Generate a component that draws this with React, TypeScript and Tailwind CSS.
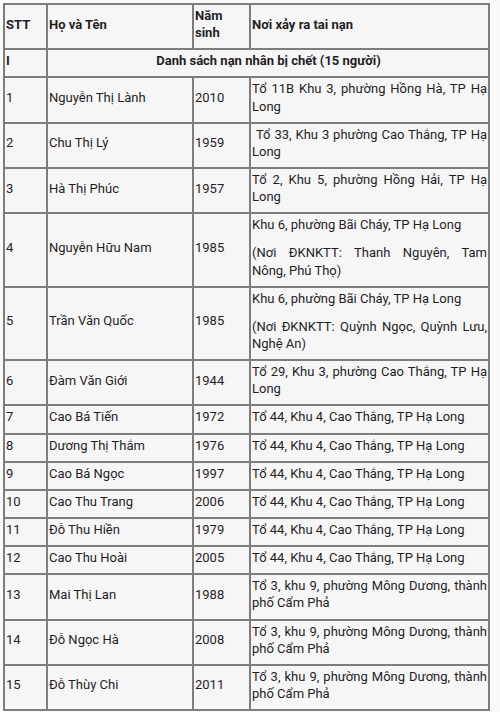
import React from "react"

type Row = {
  stt: string
  name: string
  year: string
  place: string[][]
}

const rows: Row[] = [
  { stt: "1", name: "Nguyễn Thị Lành", year: "2010", place: [["Tổ 11B Khu 3, phường Hồng Hà, TP Hạ", "Long"]] },
  { stt: "2", name: "Chu Thị Lý", year: "1959", place: [["\u00a0Tổ 33, Khu 3 phường Cao Thắng, TP Hạ", "Long"]] },
  { stt: "3", name: "Hà Thị Phúc", year: "1957", place: [["Tổ 2, Khu 5, phường Hồng Hải, TP Hạ", "Long"]] },
  {
    stt: "4",
    name: "Nguyễn Hữu Nam",
    year: "1985",
    place: [["Khu 6, phường Bãi Cháy, TP Hạ Long"], ["(Nơi ĐKNKTT: Thanh Nguyên, Tam", "Nông, Phú Thọ)"]],
  },
  {
    stt: "5",
    name: "Trần Văn Quốc",
    year: "1985",
    place: [["Khu 6, phường Bãi Cháy, TP Hạ Long"], ["(Nơi ĐKNKTT: Quỳnh Ngọc, Quỳnh Lưu,", "Nghệ An)"]],
  },
  { stt: "6", name: "Đàm Văn Giới", year: "1944", place: [["Tổ 29, Khu 3, phường Cao Thắng, TP Hạ", "Long"]] },
  { stt: "7", name: "Cao Bá Tiến", year: "1972", place: [["Tổ 44, Khu 4, Cao Thắng, TP Hạ Long"]] },
  { stt: "8", name: "Dương Thị Thắm", year: "1976", place: [["Tổ 44, Khu 4, Cao Thắng, TP Hạ Long"]] },
  { stt: "9", name: "Cao Bá Ngọc", year: "1997", place: [["Tổ 44, Khu 4, Cao Thắng, TP Hạ Long"]] },
  { stt: "10", name: "Cao Thu Trang", year: "2006", place: [["Tổ 44, Khu 4, Cao Thắng, TP Hạ Long"]] },
  { stt: "11", name: "Đỗ Thu Hiền", year: "1979", place: [["Tổ 44, Khu 4, Cao Thắng, TP Hạ Long"]] },
  { stt: "12", name: "Cao Thu Hoài", year: "2005", place: [["Tổ 44, Khu 4, Cao Thắng, TP Hạ Long"]] },
  { stt: "13", name: "Mai Thị Lan", year: "1988", place: [["Tổ 3, khu 9, phường Mông Dương, thành", "phố Cẩm Phả"]] },
  { stt: "14", name: "Đỗ Ngọc Hà", year: "2008", place: [["Tổ 3, khu 9, phường Mông Dương, thành", "phố Cẩm Phả"]] },
  { stt: "15", name: "Đỗ Thùy Chi", year: "2011", place: [["Tổ 3, khu 9, phường Mông Dương, thành", "phố Cẩm Phả"]] },
]

const cell = "border-2 border-[#7d7d7d] pl-[1px] pt-[2px] pb-[7px] align-middle"

const Place = ({ paras }: { paras: string[][] }) => (
  <>
    {paras.map((lines, i) => (
      <div key={i} className={i < paras.length - 1 ? "mb-[11px]" : ""}>
        {lines.map((line, j) => (
          <div
            key={j}
            className={
              j < lines.length - 1
                ? "whitespace-pre text-justify [text-align-last:justify]"
                : "whitespace-pre"
            }
          >
            {line}
          </div>
        ))}
      </div>
    ))}
  </>
)

export default function App() {
  return (
    <div className="w-[500px] h-[712px] overflow-hidden bg-[#fafafa] pt-[3px] pl-[3px] font-['Roboto','Noto_Sans',sans-serif] text-[13px] leading-[17.14px] text-[#1f1f1f]">
      <table className="table-fixed border-collapse w-[485px] bg-[#f6f6f6] border-2 border-[#666]">
        <colgroup>
          <col className="w-[43px]" />
          <col className="w-[146px]" />
          <col className="w-[57px]" />
          <col className="w-[239px]" />
        </colgroup>
        <tbody>
          <tr className="font-bold">
            <td className={cell}>STT</td>
            <td className={cell}>Họ và Tên</td>
            <td className={cell}>
              Năm
              <br />
              sinh
            </td>
            <td className={cell}>Nơi xảy ra tai nạn</td>
          </tr>
          <tr className="font-bold">
            <td className={cell}>I</td>
            <td className={`${cell} text-center`} colSpan={3}>
              Danh sách nạn nhân bị chết (15 người)
            </td>
          </tr>
          {rows.map((r) => (
            <tr key={r.stt}>
              <td className={cell}>{r.stt}</td>
              <td className={cell}>{r.name}</td>
              <td className={cell}>{r.year}</td>
              <td className={`${cell} align-top pr-[1px]`}>
                <Place paras={r.place} />
              </td>
            </tr>
          ))}
        </tbody>
      </table>
    </div>
  )
}
